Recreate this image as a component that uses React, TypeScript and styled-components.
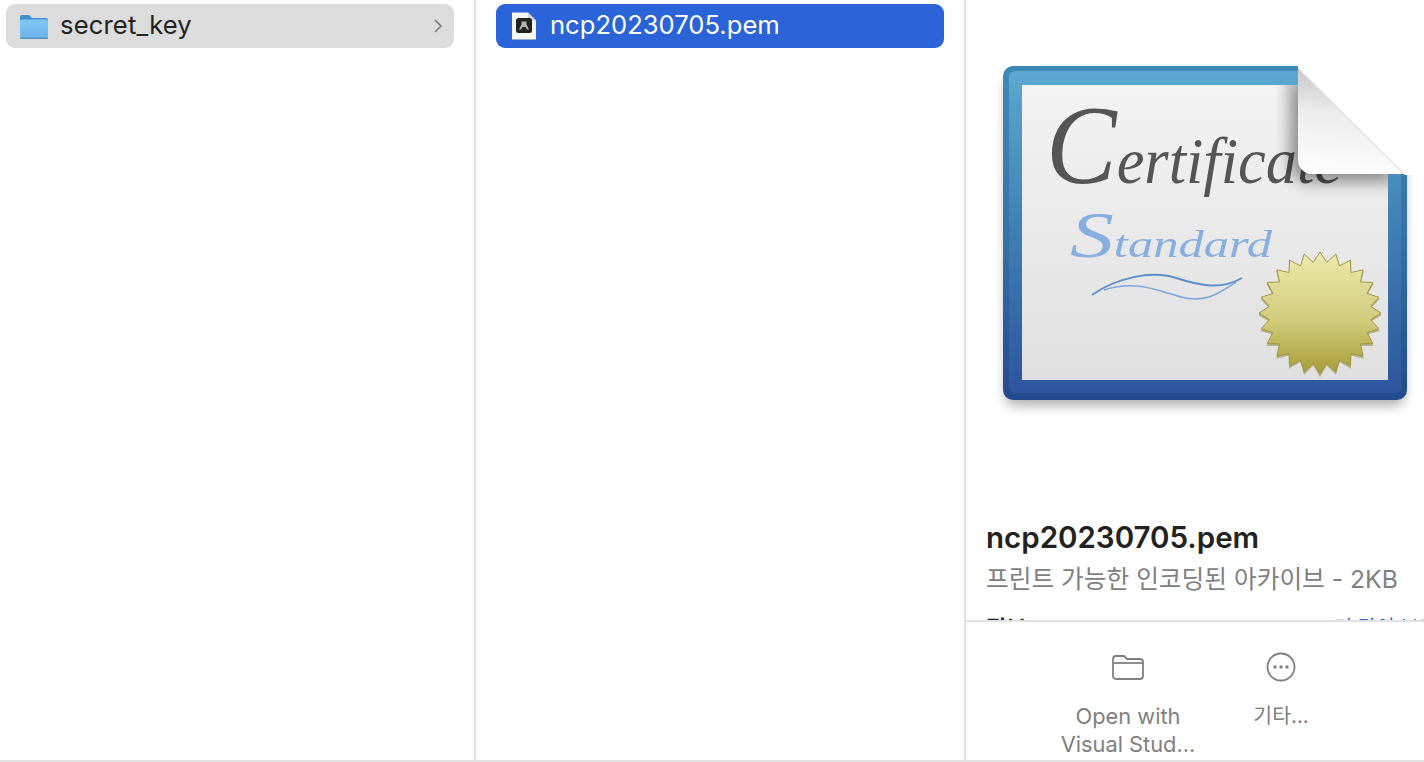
import React from "react";
import styled, { createGlobalStyle } from "styled-components";

const GlobalStyle = createGlobalStyle`
  html, body {
    margin: 0;
    padding: 0;
    background: #ffffff;
    overflow: hidden;
  }
  body {
    font-family: Inter, "Noto Sans CJK KR", sans-serif;
  }
`;

const Window = styled.div`
  display: grid;
  grid-template-columns: 476px 490px 1fr;
  width: 1424px;
  height: 762px;
  box-sizing: border-box;
  border-bottom: 2px solid #e2e2e2;
`;

const Column = styled.div<{ $left: number }>`
  box-sizing: border-box;
  height: 760px;
  border-right: 2px solid #e2e2e2;
  padding: 4px 20px 0 ${({ $left }) => $left}px;
`;

const Row = styled.div<{ $selected?: boolean }>`
  display: flex;
  align-items: center;
  height: 44px;
  box-sizing: border-box;
  border-radius: 9px;
  padding-left: ${({ $selected }) => ($selected ? 16 : 13)}px;
  padding-right: 11px;
  background: ${({ $selected }) => ($selected ? "#2b63d9" : "#dcdcdc")};
  color: ${({ $selected }) => ($selected ? "#ffffff" : "#222222")};
`;

const RowName = styled.span<{ $selected?: boolean }>`
  flex: 1;
  margin-left: ${({ $selected }) => ($selected ? 14 : 11)}px;
  margin-top: -2px;
  font-size: 25.6px;
  line-height: 30px;
  letter-spacing: ${({ $selected }) => ($selected ? 0 : 0.15)}px;
`;

const Preview = styled.div`
  display: flex;
  flex-direction: column;
  height: 760px;
  overflow: hidden;
`;

const PreviewBody = styled.div`
  height: 620px;
  box-sizing: border-box;
  overflow: hidden;
  padding: 50px 0 0 20px;
`;

const CertificateBox = styled.div`
  height: 372px;
`;

const NameBlock = styled.div`
  margin-top: 97px;
`;

const FileName = styled.div`
  font-size: 29.5px;
  line-height: 36px;
  font-weight: 600;
  color: #222222;
  white-space: nowrap;
`;

const FileKind = styled.div`
  margin-top: 9px;
  font-size: 24.7px;
  line-height: 30px;
  color: #808080;
  white-space: nowrap;
`;

const InfoRow = styled.div`
  display: flex;
  justify-content: space-between;
  margin-top: 19px;
  margin-right: -13px;
`;

const InfoTitle = styled.span`
  font-size: 22px;
  line-height: 30px;
  font-weight: 700;
  color: #222222;
`;

const InfoLink = styled.span`
  font-size: 20px;
  line-height: 30px;
  color: #2b63d9;
  white-space: nowrap;
`;

const Actions = styled.div`
  display: flex;
  justify-content: flex-start;
  border-top: 2px solid #e2e2e2;
  height: 140px;
  box-sizing: border-box;
  padding: 30px 0 0 97px;
  gap: 58px;
`;

const Action = styled.div<{ $width: number }>`
  display: flex;
  flex-direction: column;
  align-items: center;
  width: ${({ $width }) => $width}px;
  color: #808080;
`;

const ActionLabel = styled.div`
  margin-top: 20px;
  font-size: 21.8px;
  line-height: 28px;
  text-align: center;
  white-space: nowrap;
`;

const ActionLabelShort = styled(ActionLabel)`
  font-size: 20.5px;
`;

function FolderIcon() {
  return (
    <svg width="30" height="28" viewBox="0 0 30 28">
      <defs>
        <linearGradient id="fold" x1="0" y1="0" x2="0" y2="1">
          <stop offset="0" stopColor="#82c6f4" />
          <stop offset="1" stopColor="#6ab5ee" />
        </linearGradient>
      </defs>
      <path d="M1 5a2 2 0 0 1 2-2h7l3 3h14a2 2 0 0 1 2 2v3H1z" fill="#3f8fd2" />
      <rect x="1" y="7.5" width="28" height="19" rx="2" fill="url(#fold)" />
      <rect x="1" y="25.5" width="28" height="1.5" rx="0.7" fill="#5a8fb8" />
    </svg>
  );
}

function PemIcon() {
  return (
    <svg width="24" height="28" viewBox="0 0 24 28">
      <path d="M0 0.5h16l8 8v19H0z" fill="#f6f6f6" />
      <path d="M16 0.5l8 8h-8z" fill="#d4d4d4" />
      <rect x="4" y="6" width="16" height="15" rx="2.5" fill="#222222" />
      <path d="M9.5 9.5h5v3l2.5 5h-2l-1.5-2.5h-3L9 17.5H7l2.5-5z" fill="#b4b4b4" />
    </svg>
  );
}

function ChevronIcon() {
  return (
    <svg width="10" height="16" viewBox="0 0 10 16">
      <path d="M2 2l6 6-6 6" fill="none" stroke="#7a7a7a" strokeWidth="1.5" />
    </svg>
  );
}

function OpenIcon() {
  return (
    <svg width="34" height="30" viewBox="0 0 34 30">
      <path
        d="M2 7a3 3 0 0 1 3-3h8l3 3h13a3 3 0 0 1 3 3v14a3 3 0 0 1-3 3H5a3 3 0 0 1-3-3z"
        fill="none"
        stroke="#808080"
        strokeWidth="1.8"
      />
      <path d="M2 11h30" stroke="#808080" strokeWidth="1.8" />
    </svg>
  );
}

function MoreIcon() {
  return (
    <svg width="30" height="30" viewBox="0 0 30 30">
      <circle cx="15" cy="15" r="13.5" fill="none" stroke="#808080" strokeWidth="1.8" />
      <circle cx="9" cy="15" r="1.7" fill="#808080" />
      <circle cx="15" cy="15" r="1.7" fill="#808080" />
      <circle cx="21" cy="15" r="1.7" fill="#808080" />
    </svg>
  );
}

// seal with alternating outer and inner radius
function sealPoints(cx: number, cy: number, outer: number, inner: number, count: number) {
  const pts: string[] = [];
  for (let i = 0; i < count * 2; i++) {
    const r = i % 2 === 0 ? outer : inner;
    const a = (Math.PI * i) / count;
    pts.push(`${(cx + r * Math.sin(a)).toFixed(1)},${(cy - r * Math.cos(a)).toFixed(1)}`);
  }
  return pts.join(" ");
}

function CertificateIcon() {
  return (
    <svg width="438" height="372" viewBox="0 0 438 372" style={{ display: "block" }}>
      <defs>
        <linearGradient id="frameOuter" x1="0" y1="0" x2="0" y2="1">
          <stop offset="0" stopColor="#3e8ab6" />
          <stop offset="0.5" stopColor="#3872a8" />
          <stop offset="1" stopColor="#234a8e" />
        </linearGradient>
        <linearGradient id="frameInner" x1="0" y1="0" x2="0" y2="1">
          <stop offset="0" stopColor="#5aa8cf" />
          <stop offset="0.5" stopColor="#3f7fb4" />
          <stop offset="1" stopColor="#2d559e" />
        </linearGradient>
        <linearGradient id="paper" x1="0" y1="0" x2="0" y2="1">
          <stop offset="0" stopColor="#f3f3f3" />
          <stop offset="1" stopColor="#e0e0e0" />
        </linearGradient>
        <linearGradient id="gold" x1="0" y1="0" x2="0" y2="1">
          <stop offset="0" stopColor="#eceaae" />
          <stop offset="0.55" stopColor="#d2cc7c" />
          <stop offset="1" stopColor="#a89c38" />
        </linearGradient>
        <linearGradient id="curl" x1="0.15" y1="0" x2="0.05" y2="1">
          <stop offset="0" stopColor="#c6c6c6" />
          <stop offset="0.4" stopColor="#ececec" />
          <stop offset="1" stopColor="#ffffff" />
        </linearGradient>
        <filter id="shadow" x="-20%" y="-20%" width="140%" height="140%">
          <feGaussianBlur stdDeviation="6" />
        </filter>
        <filter id="curlShadow" x="-30%" y="-30%" width="160%" height="160%">
          <feGaussianBlur stdDeviation="8" />
        </filter>
        <filter id="soft" x="-5%" y="-5%" width="110%" height="110%">
          <feGaussianBlur stdDeviation="0.6" />
        </filter>
        <clipPath id="paperClip">
          <rect x="36" y="35" width="366" height="295" />
        </clipPath>
      </defs>
      <rect x="19" y="26" width="400" height="330" rx="10" fill="#000000" opacity="0.3" filter="url(#shadow)" />
      <rect x="17" y="16" width="404" height="334" rx="10" fill="url(#frameOuter)" />
      <rect x="23" y="21" width="392" height="322" rx="6" fill="url(#frameInner)" />
      <rect x="36" y="35" width="366" height="295" fill="url(#paper)" />
      <g filter="url(#soft)">
        <text
          x="60"
          y="133"
          fontFamily="'Liberation Serif', serif"
          fontStyle="italic"
          fontSize="66"
          fill="#555555"
          textLength="296"
          lengthAdjust="spacingAndGlyphs"
        >
          <tspan fontSize="112">C</tspan>ertificate
        </text>
        <text
          x="84"
          y="207"
          fontFamily="'Liberation Serif', serif"
          fontStyle="italic"
          fontSize="38"
          fill="#86aee0"
          textLength="202"
          lengthAdjust="spacingAndGlyphs"
        >
          <tspan fontSize="66">S</tspan>tandard
        </text>
        <path d="M106 245C130 228 165 220 190 228S235 240 256 228" fill="none" stroke="#5d8fd0" strokeWidth="2" />
        <path d="M118 240C150 230 170 240 195 247S235 242 250 232" fill="none" stroke="#7ba5dc" strokeWidth="1.6" />
      </g>
      <g clipPath="url(#paperClip)">
        <path d="M304 20l114 112H322a18 18 0 0 1-18-18z" fill="#000000" opacity="0.42" filter="url(#curlShadow)" />
      </g>
      <polygon points={sealPoints(334, 263, 62, 51, 24)} fill="#7f7628" opacity="0.45" filter="url(#soft)" transform="translate(0 2)" />
      <polygon points={sealPoints(334, 263, 61, 51, 24)} fill="url(#gold)" stroke="#a09640" strokeWidth="1" />
      <polygon points="312,8 430,8 430,125 419,125 312,18" fill="#ffffff" />
      <path d="M312 18l106 106H326a14 14 0 0 1-14-14z" fill="url(#curl)" />
      <path d="M312 18l106 106" fill="none" stroke="#e4e4e4" strokeWidth="1.2" />
    </svg>
  );
}

export default function App() {
  return (
    <>
      <GlobalStyle />
      <Window>
        <Column $left={6}>
          <Row>
            <FolderIcon />
            <RowName>secret_key</RowName>
            <ChevronIcon />
          </Row>
        </Column>
        <Column $left={20}>
          <Row $selected>
            <PemIcon />
            <RowName $selected>ncp20230705.pem</RowName>
          </Row>
        </Column>
        <Preview>
          <PreviewBody>
            <CertificateBox>
              <CertificateIcon />
            </CertificateBox>
            <NameBlock>
              <FileName>ncp20230705.pem</FileName>
              <FileKind>프린트 가능한 인코딩된 아카이브 - 2KB</FileKind>
              <InfoRow>
                <InfoTitle>정보</InfoTitle>
                <InfoLink>더 많이 보기</InfoLink>
              </InfoRow>
            </NameBlock>
          </PreviewBody>
          <Actions>
            <Action $width={130}>
              <OpenIcon />
              <ActionLabel>
                Open with
                <br />
                Visual Stud...
              </ActionLabel>
            </Action>
            <Action $width={60}>
              <MoreIcon />
              <ActionLabelShort>기타...</ActionLabelShort>
            </Action>
          </Actions>
        </Preview>
      </Window>
    </>
  );
}
